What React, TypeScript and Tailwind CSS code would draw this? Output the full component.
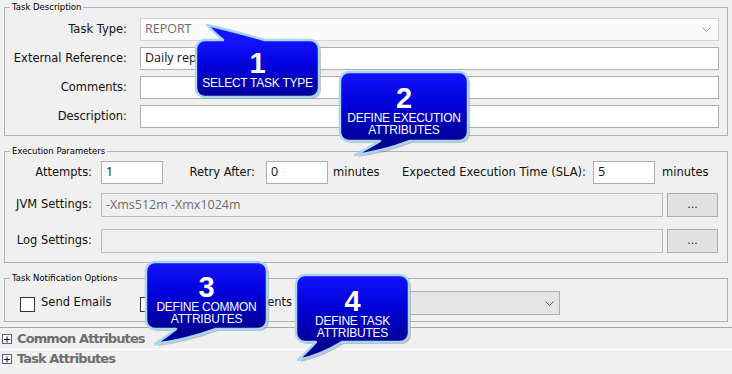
import React from "react";

// Blue "step" bubble laid over the form
type CalloutProps = {
  pos: string;
  w: number;
  h: number;
  tail: "top" | "bottom";
  b1: number;
  b2: number;
  tx: number;
  ty: number;
  num: string;
  lines: string[];
  numPad: string;
};

function bubblePath(p: CalloutProps) {
  const { w, h, tail, b1, b2, tx, ty } = p;
  const r = 9;
  if (tail === "top") {
    const c1x = tx + (b1 - tx) * 0.55;
    const c1y = ty * 0.4;
    const c2x = tx + (b2 - tx) * 0.45;
    const c2y = ty * 0.6;
    return `M${r},0 L${b1},0 Q${c1x},${c1y} ${tx},${ty} Q${c2x},${c2y} ${b2},0 L${w - r},0 A${r},${r} 0 0 1 ${w},${r} L${w},${h - r} A${r},${r} 0 0 1 ${w - r},${h} L${r},${h} A${r},${r} 0 0 1 0,${h - r} L0,${r} A${r},${r} 0 0 1 ${r},0 Z`;
  }
  const c1x = tx + (b2 - tx) * 0.5;
  const c1y = h + (ty - h) * 0.75;
  const c2x = tx + (b1 - tx) * 0.6;
  const c2y = h + (ty - h) * 0.45;
  return `M${r},0 L${w - r},0 A${r},${r} 0 0 1 ${w},${r} L${w},${h - r} A${r},${r} 0 0 1 ${w - r},${h} L${b2},${h} Q${c1x},${c1y} ${tx},${ty} Q${c2x},${c2y} ${b1},${h} L${r},${h} A${r},${r} 0 0 1 0,${h - r} L0,${r} A${r},${r} 0 0 1 ${r},0 Z`;
}

const Callout: React.FC<CalloutProps> = (p) => {
  const d = bubblePath(p);
  const id = `grad${p.num}`;
  return (
    <div className={`absolute ${p.pos}`}>
      <svg width={p.w} height={p.h} className="absolute left-0 top-0 overflow-visible">
        <defs>
          <linearGradient id={id} gradientUnits="userSpaceOnUse" x1="0" y1="0" x2="0" y2={p.h}>
            <stop offset="0" stopColor="#1414ff" />
            <stop offset="0.5" stopColor="#0000d6" />
            <stop offset="1" stopColor="#000096" />
          </linearGradient>
        </defs>
        <path d={d} transform="translate(2,2)" fill="#7a7a7a" opacity="0.45" />
        <path d={d} fill={`url(#${id})`} stroke="#a8d4f0" strokeWidth="2.5" strokeLinejoin="round" />
      </svg>
      <div className={`absolute inset-0 flex flex-col items-center text-white font-['Liberation_Sans',Arial,sans-serif] ${p.numPad}`}>
        <div className="text-[29px] leading-[24px] font-bold">{p.num}</div>
        <div className="mt-[3px] text-[12px] leading-[11.5px] tracking-[-0.25px] text-center">
          {p.lines.map((l) => (
            <div key={l}>{l}</div>
          ))}
        </div>
      </div>
    </div>
  );
};

const Field: React.FC<{ className?: string; children?: React.ReactNode }> = ({ className = "", children }) => (
  <div className={`flex items-center h-full border px-[4px] font-['Open_Sans',sans-serif] text-[12.5px] ${className}`}>
    {children}
  </div>
);

const DotsButton = () => (
  <div className="ml-[4px] w-[51px] h-full flex items-center justify-center border border-[#adadad] bg-[#e1e1e1] text-[11px]">
    ...
  </div>
);

const PlusIcon = () => (
  <svg width="10" height="10" viewBox="0 0 10 10">
    <rect x="0.5" y="0.5" width="9" height="9" fill="#fff" stroke="#55657e" />
    <path d="M2 5.5h6M5 2.5v6" stroke="#111" />
  </svg>
);

const Legend: React.FC<{ children: React.ReactNode }> = ({ children }) => (
  <legend className="ml-[5px] px-[2px] text-[8.5px] leading-[10px] text-black">{children}</legend>
);

export default function App() {
  return (
    <div className="relative w-[732px] h-[374px] overflow-hidden bg-[#f0f0f0] font-['DejaVu_Sans',sans-serif] text-[11.5px] text-[#111]">
      <div className="px-[4px] pt-[2px]">
        {/* Task Description */}
        <fieldset className="min-w-0 border border-[#b0b0b0]">
          <Legend>Task Description</Legend>
          <div className="flex flex-col gap-[6px] pt-[6px] pb-[7px] pr-[8px]">
            <div className="flex items-center h-[23px]">
              <div className="w-[122px] text-right">Task Type:</div>
              <div className="ml-[13px] flex-1 h-full">
                <Field className="border-[#d4d4d4] bg-[#fbfbfb] text-[#6d6d6d] justify-between">
                  <span>REPORT</span>
                  <svg width="9" height="5" className="mr-[3px]">
                    <path d="M0.5 0.5L4.5 4.5L8.5 0.5" stroke="#9a9a9a" fill="none" />
                  </svg>
                </Field>
              </div>
            </div>
            <div className="flex items-center h-[23px]">
              <div className="w-[122px] text-right">External Reference:</div>
              <div className="ml-[13px] flex-1 h-full">
                <Field className="border-[#adadad] bg-white">Daily report</Field>
              </div>
            </div>
            <div className="flex items-center h-[23px]">
              <div className="w-[122px] text-right">Comments:</div>
              <div className="ml-[13px] flex-1 h-full">
                <Field className="border-[#adadad] bg-white" />
              </div>
            </div>
            <div className="flex items-center h-[23px]">
              <div className="w-[122px] text-right">Description:</div>
              <div className="ml-[13px] flex-1 h-full">
                <Field className="border-[#adadad] bg-white" />
              </div>
            </div>
          </div>
        </fieldset>

        {/* Execution Parameters */}
        <fieldset className="mt-[10px] min-w-0 border border-[#b0b0b0]">
          <Legend>Execution Parameters</Legend>
          <div className="pt-[5px] pb-[9px] pr-[9px]">
            <div className="flex items-center h-[23px]">
              <div className="w-[87px] text-right">Attempts:</div>
              <Field className="ml-[9px] w-[62px] border-[#adadad] bg-white">1</Field>
              <div className="ml-[26px] w-[66px] text-right whitespace-nowrap">Retry After:</div>
              <Field className="ml-[11px] w-[62px] border-[#adadad] bg-white">0</Field>
              <div className="ml-[5px] w-[44px]">minutes</div>
              <div className="ml-[25px] w-[181px] text-right whitespace-nowrap">Expected Execution Time (SLA):</div>
              <Field className="ml-[10px] w-[62px] border-[#adadad] bg-white">5</Field>
              <div className="ml-[7px]">minutes</div>
            </div>
            <div className="mt-[9px] flex items-center h-[24px]">
              <div className="w-[87px] text-right whitespace-nowrap">JVM Settings:</div>
              <Field className="ml-[9px] flex-1 border-[#bcbcbc] bg-[#f0f0f0] text-[#6d6d6d]">-Xms512m -Xmx1024m</Field>
              <DotsButton />
            </div>
            <div className="mt-[12px] flex items-center h-[24px]">
              <div className="w-[87px] text-right whitespace-nowrap">Log Settings:</div>
              <Field className="ml-[9px] flex-1 border-[#bcbcbc] bg-[#f0f0f0]" />
              <DotsButton />
            </div>
          </div>
        </fieldset>

        {/* Task Notification Options */}
        <fieldset className="mt-[10px] min-w-0 border border-[#b0b0b0]">
          <Legend>Task Notification Options</Legend>
          <div className="pt-[8px] pb-[6px] flex h-[38px]">
            <div className="ml-[15px] mt-[6px] w-[15px] h-[15px] border border-[#333] bg-white" />
            <div className="ml-[6px] w-[99px] self-center">Send Emails</div>
            <div className="mt-[6px] w-[15px] h-[15px] border border-[#333] bg-white" />
            <div className="ml-[6px] w-[133px] self-center whitespace-nowrap">Send Emails on Events</div>
            <div className="ml-[6px] w-[260px] h-[24px] flex items-center justify-end border border-[#adadad] bg-[#e5e5e5] pr-[5px]">
              <svg width="9" height="5">
                <path d="M0.5 0.5L4.5 4.5L8.5 0.5" stroke="#555" fill="none" />
              </svg>
            </div>
          </div>
        </fieldset>
      </div>

      {/* Collapsible sections */}
      <div className="mt-[5px] h-px bg-[#a8a8a8]" />
      <div className="h-[21px] flex items-center pl-[2px]">
        <PlusIcon />
        <span className="ml-[5px] font-bold text-[13px] tracking-[-0.9px] text-[#6e6e6e]">Common Attributes</span>
      </div>
      <div className="h-px bg-white" />
      <div className="h-[17px] flex items-center pl-[2px]">
        <PlusIcon />
        <span className="ml-[5px] font-bold text-[13px] tracking-[-0.9px] text-[#6e6e6e]">Task Attributes</span>
      </div>

      {/* Step bubbles */}
      <Callout
        pos="left-[196px] top-[40px] w-[123px] h-[57px]"
        w={123}
        h={57}
        tail="top"
        b1={27}
        b2={69}
        tx={11}
        ty={-15}
        num="1"
        lines={["SELECT TASK TYPE"]}
        numPad="pt-[11px]"
      />
      <Callout
        pos="left-[340px] top-[72px] w-[128px] h-[69px]"
        w={128}
        h={69}
        tail="bottom"
        b1={40}
        b2={70}
        tx={15}
        ty={83}
        num="2"
        lines={["DEFINE EXECUTION", "ATTRIBUTES"]}
        numPad="pt-[14px]"
      />
      <Callout
        pos="left-[146px] top-[262px] w-[121px] h-[67px]"
        w={121}
        h={67}
        tail="bottom"
        b1={30}
        b2={70}
        tx={9}
        ty={82}
        num="3"
        lines={["DEFINE COMMON", "ATTRIBUTES"]}
        numPad="pt-[13px]"
      />
      <Callout
        pos="left-[296px] top-[275px] w-[113px] h-[67px]"
        w={113}
        h={67}
        tail="bottom"
        b1={20}
        b2={46}
        tx={2}
        ty={85}
        num="4"
        lines={["DEFINE TASK", "ATTRIBUTES"]}
        numPad="pt-[14px]"
      />
    </div>
  );
}
